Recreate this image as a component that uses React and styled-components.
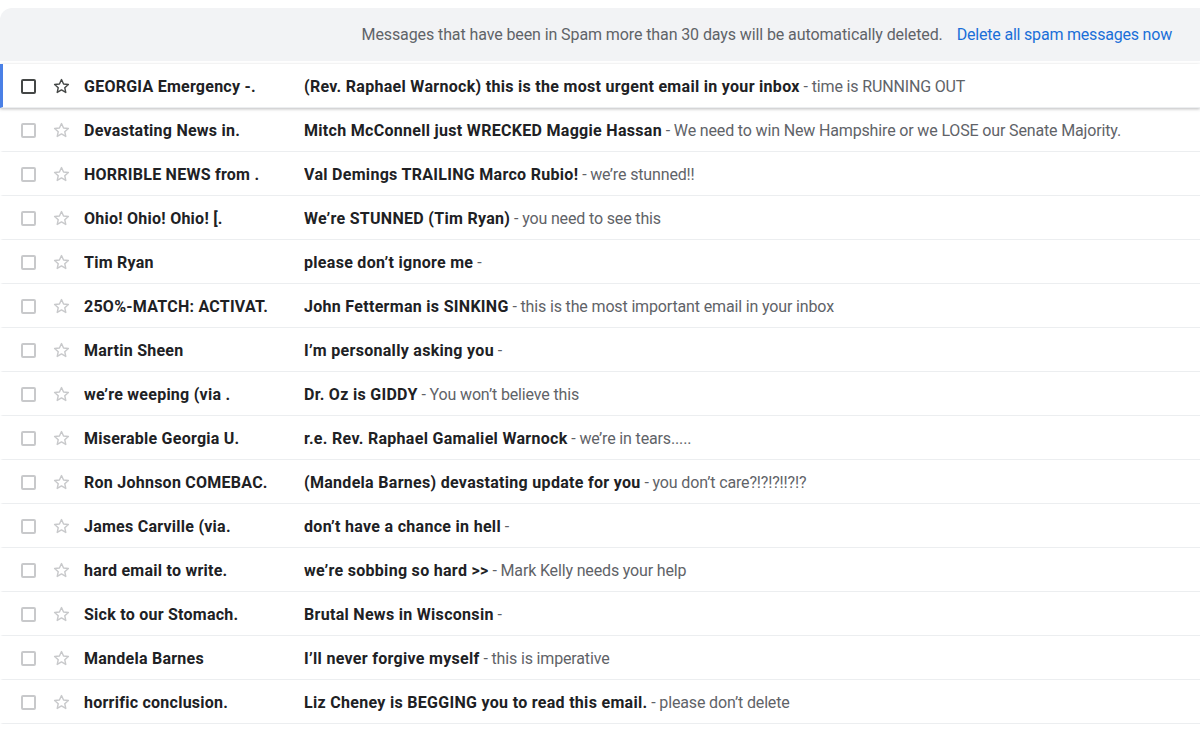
import React from "react";
import styled, { createGlobalStyle } from "styled-components";

const GlobalStyle = createGlobalStyle`
  html, body {
    margin: 0;
    padding: 0;
    background: #ffffff;
    font-family: Roboto, "Noto Sans", "Liberation Sans", sans-serif;
    color: #202124;
    -webkit-font-smoothing: antialiased;
  }
`;

const Page = styled.div`
  width: 1200px;
  padding-top: 8px;
  overflow: hidden;
`;

const Banner = styled.div`
  display: flex;
  align-items: center;
  justify-content: flex-end;
  gap: 14px;
  box-sizing: border-box;
  height: 53px;
  padding: 0 28px 0 0;
  background: #f2f3f5;
  border-top-left-radius: 12px;
  font-size: 16px;
  letter-spacing: -0.1px;
  color: #5f6368;
`;

const BannerLink = styled.a`
  color: #1a6fd8;
  letter-spacing: -0.2px;
  text-decoration: none;
  cursor: pointer;
`;

const List = styled.div`
  margin-top: 3px;
  display: flex;
  flex-direction: column;
`;

const Row = styled.div`
  position: relative;
  display: flex;
  align-items: center;
  box-sizing: border-box;
  height: 44px;
  padding-top: 2px;
  border-bottom: 1px solid #eceef0;
  background: #ffffff;
  font-size: 16px;
  white-space: nowrap;
  z-index: ${(p) => (p.$active ? 2 : 1)};
  box-shadow: ${(p) =>
    p.$active ? "0 1px 3px rgba(60, 64, 67, 0.35)" : "none"};
  border-left: 3px solid ${(p) => (p.$active ? "#4a80e6" : "transparent")};
`;

const Check = styled.div`
  width: 15px;
  height: 15px;
  margin-left: 18px;
  box-sizing: border-box;
  border: 2px solid ${(p) => (p.$active ? "#444746" : "#c8c9cb")};
  border-radius: 2px;
  flex-shrink: 0;
`;

const StarBox = styled.div`
  width: 20px;
  height: 20px;
  margin-left: 15px;
  display: flex;
  align-items: center;
  justify-content: center;
  flex-shrink: 0;
`;

const Sender = styled.div`
  width: 220px;
  margin-left: 13px;
  font-weight: 700;
  letter-spacing: 0.25px;
  color: #202124;
  flex-shrink: 0;
  overflow: hidden;
`;

const Subject = styled.div`
  flex: 1;
  overflow: hidden;
`;

const Title = styled.span`
  font-weight: 700;
  letter-spacing: 0.3px;
  color: #202124;
`;

const Snippet = styled.span`
  font-weight: 400;
  letter-spacing: -0.15px;
  color: #5f6368;
`;

function Star({ active }) {
  return (
    <svg width="19" height="19" viewBox="0 0 24 24">
      <path
        d="M12 3.2l2.6 5.6 6.1.6-4.6 4.1 1.3 6-5.4-3.1-5.4 3.1 1.3-6-4.6-4.1 6.1-.6z"
        fill="none"
        stroke={active ? "#444746" : "#c8c9cb"}
        strokeWidth="1.8"
        strokeLinejoin="round"
      />
    </svg>
  );
}

const mails = [
  ["GEORGIA Emergency -.", "(Rev. Raphael Warnock) this is the most urgent email in your inbox", "time is RUNNING OUT"],
  ["Devastating News in.", "Mitch McConnell just WRECKED Maggie Hassan", "We need to win New Hampshire or we LOSE our Senate Majority."],
  ["HORRIBLE NEWS from .", "Val Demings TRAILING Marco Rubio!", "we’re stunned!!"],
  ["Ohio! Ohio! Ohio! [.", "We’re STUNNED (Tim Ryan)", "you need to see this"],
  ["Tim Ryan", "please don’t ignore me", ""],
  ["25O%-MATCH: ACTIVAT.", "John Fetterman is SINKING", "this is the most important email in your inbox"],
  ["Martin Sheen", "I’m personally asking you", ""],
  ["we’re weeping (via .", "Dr. Oz is GIDDY", "You won’t believe this"],
  ["Miserable Georgia U.", "r.e. Rev. Raphael Gamaliel Warnock", "we’re in tears....."],
  ["Ron Johnson COMEBAC.", "(Mandela Barnes) devastating update for you", "you don’t care?!?!?!!?!?"],
  ["James Carville (via.", "don’t have a chance in hell", ""],
  ["hard email to write.", "we’re sobbing so hard >>", "Mark Kelly needs your help"],
  ["Sick to our Stomach.", "Brutal News in Wisconsin", ""],
  ["Mandela Barnes", "I’ll never forgive myself", "this is imperative"],
  ["horrific conclusion.", "Liz Cheney is BEGGING you to read this email.", "please don’t delete"],
];

export default function App() {
  return (
    <Page>
      <GlobalStyle />
      <Banner>
        <span>
          Messages that have been in Spam more than 30 days will be
          automatically deleted.
        </span>
        <BannerLink>Delete all spam messages now</BannerLink>
      </Banner>
      <List>
        {mails.map(([from, title, snippet], i) => (
          <Row key={i} $active={i === 0}>
            <Check $active={i === 0} />
            <StarBox>
              <Star active={i === 0} />
            </StarBox>
            <Sender>{from}</Sender>
            <Subject>
              <Title>{title}</Title>
              <Snippet>{snippet ? ` - ${snippet}` : " -"}</Snippet>
            </Subject>
          </Row>
        ))}
      </List>
    </Page>
  );
}
